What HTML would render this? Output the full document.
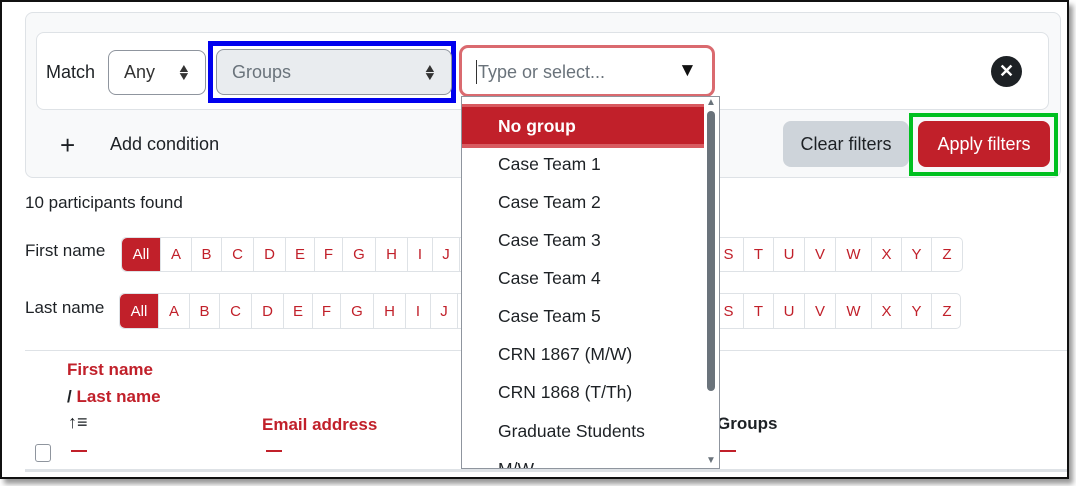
<!DOCTYPE html><html><head><style>
*{box-sizing:border-box;margin:0;padding:0}
body{width:1076px;height:486px;background:#fff;font-family:"Liberation Sans",sans-serif;position:relative;overflow:hidden}
.a{position:absolute}
.frame{left:0;top:0;width:1069px;height:479px;box-shadow:4px 5px 5px #999;background:#fff;overflow:hidden}
.bord{left:0;top:0;width:1069px;height:479px;border:2px solid #111;z-index:10}
.t{color:#1d2125;font-size:18px}
.cell{position:absolute;height:100%;border-right:1px solid #dee2e6;color:#c1202a;font-size:15px;text-align:center;display:flex;align-items:center;justify-content:center}
.item{position:absolute;left:36px;font-size:17.5px;color:#1d2125}
.ud{font-size:12px;line-height:8px;color:#333;transform:scaleX(1.2)}
</style></head><body>
<div class="a frame">
<div class="a" style="left:25px;top:12px;width:1036px;height:166px;background:#f8f9fa;border:1px solid #dee2e6;border-radius:8px"></div>
<div class="a" style="left:36px;top:32px;width:1013px;height:78px;background:#fff;border:1px solid #dee2e6;border-radius:8px"></div>
<div class="a t" style="left:46px;top:62px">Match</div>
<div class="a" style="left:108px;top:50px;width:98px;height:45px;border:1px solid #8f959e;border-radius:8px;background:#fff"></div>
<div class="a t" style="left:124px;top:62px;color:#333">Any</div>
<div class="a ud" style="left:178px;top:64px">▲<br>▼</div>
<div class="a" style="left:208px;top:41px;width:248px;height:62px;border:5px solid #0000ee"></div>
<div class="a" style="left:216px;top:49px;width:236px;height:46px;background:#e9ecef;border:1px solid #8f959e;border-radius:8px"></div>
<div class="a t" style="left:232px;top:62px;color:#6a737b">Groups</div>
<div class="a ud" style="left:424px;top:64px">▲<br>▼</div>
<div class="a" style="left:459px;top:45px;width:256px;height:52px;border:3px solid #da6a6f;border-radius:9px;background:#fff"></div>
<div class="a" style="left:476px;top:60px;width:1px;height:24px;background:#333"></div>
<div class="a t" style="left:478px;top:62px;color:#6a737b">Type or select...</div>
<div class="a" style="left:678px;top:60px;font-size:19px;color:#111">▼</div>
<div class="a" style="left:991px;top:56px;width:31px;height:31px;border-radius:50%;background:#1d2125;color:#fff;font-weight:bold;font-size:18px;text-align:center;line-height:31px">✕</div>
<div class="a" style="left:60px;top:130px;font-size:26px;color:#1d2125">+</div>
<div class="a t" style="left:110px;top:134px">Add condition</div>
<div class="a" style="left:783px;top:121px;width:126px;height:46px;background:#ced4da;border-radius:8px;color:#1d2125;font-size:18px;text-align:center;line-height:46px">Clear filters</div>
<div class="a" style="left:909px;top:113px;width:149px;height:63px;border:4px solid #00c020"></div>
<div class="a" style="left:918px;top:121px;width:132px;height:46px;background:#c1202a;border-radius:8px;color:#fff;font-size:18px;text-align:center;line-height:46px">Apply filters</div>
<div class="a" style="left:25px;top:193px;font-size:17px;color:#1d2125">10 participants found</div>
<div class="a t" style="left:25px;top:241px;font-size:17px">First name</div>
<div class="a t" style="left:25px;top:298px;font-size:17px">Last name</div>
<div class="a" style="left:121px;top:237px;width:842px;height:35px;border:1px solid #dee2e6;border-radius:5px">
<div class="cell" style="left:0;width:39px;background:#c1202a;color:#fff;border-radius:5px 0 0 5px">All</div>
<div class="cell" style="left:39px;width:31px">A</div><div class="cell" style="left:70px;width:30px">B</div><div class="cell" style="left:100px;width:32px">C</div><div class="cell" style="left:132px;width:32px">D</div><div class="cell" style="left:164px;width:29px">E</div><div class="cell" style="left:193px;width:28px">F</div><div class="cell" style="left:221px;width:33px">G</div><div class="cell" style="left:254px;width:32px">H</div><div class="cell" style="left:286px;width:25px">I</div><div class="cell" style="left:311px;width:27px">J</div>
<div class="cell" style="left:592px;width:30px">S</div><div class="cell" style="left:622px;width:30px">T</div><div class="cell" style="left:652px;width:31px">U</div><div class="cell" style="left:683px;width:31px">V</div><div class="cell" style="left:714px;width:36px">W</div><div class="cell" style="left:750px;width:30px">X</div><div class="cell" style="left:780px;width:30px">Y</div><div class="cell" style="left:810px;width:30px;border:0">Z</div>
</div>
<div class="a" style="left:119px;top:293px;width:842px;height:36px;border:1px solid #dee2e6;border-radius:5px">
<div class="cell" style="left:0;width:39px;background:#c1202a;color:#fff;border-radius:5px 0 0 5px">All</div>
<div class="cell" style="left:39px;width:31px">A</div><div class="cell" style="left:70px;width:30px">B</div><div class="cell" style="left:100px;width:32px">C</div><div class="cell" style="left:132px;width:32px">D</div><div class="cell" style="left:164px;width:29px">E</div><div class="cell" style="left:193px;width:28px">F</div><div class="cell" style="left:221px;width:33px">G</div><div class="cell" style="left:254px;width:32px">H</div><div class="cell" style="left:286px;width:25px">I</div><div class="cell" style="left:311px;width:27px">J</div>
<div class="cell" style="left:594px;width:30px">S</div><div class="cell" style="left:624px;width:30px">T</div><div class="cell" style="left:654px;width:31px">U</div><div class="cell" style="left:685px;width:31px">V</div><div class="cell" style="left:716px;width:36px">W</div><div class="cell" style="left:752px;width:30px">X</div><div class="cell" style="left:782px;width:30px">Y</div><div class="cell" style="left:812px;width:30px;border:0">Z</div>
</div>
<div class="a" style="left:25px;top:350px;width:1050px;height:1px;background:#dee2e6"></div>
<div class="a" style="left:67px;top:360px;font-weight:bold;font-size:17px;color:#c1202a">First name</div>
<div class="a" style="left:67px;top:387px;font-weight:bold;font-size:17px;color:#1d2125">/ <span style="color:#c1202a">Last name</span></div>
<div class="a" style="left:68px;top:412px;font-weight:bold;font-size:18px;color:#1d2125">↑≡</div>
<div class="a" style="left:262px;top:415px;font-weight:bold;font-size:17px;color:#c1202a">Email address</div>
<div class="a" style="left:717px;top:414px;font-weight:bold;font-size:17px;color:#1d2125">Groups</div>
<div class="a" style="left:71px;top:450px;width:16px;height:2px;background:#c1202a"></div>
<div class="a" style="left:266px;top:450px;width:16px;height:2px;background:#c1202a"></div>
<div class="a" style="left:720px;top:450px;width:16px;height:2px;background:#c1202a"></div>
<div class="a" style="left:35px;top:444px;width:16px;height:18px;border:1px solid #8f959e;border-radius:3px"></div>
<div class="a" style="left:25px;top:469px;width:1050px;height:3px;background:#dee2e6"></div>
<div class="a" style="left:461px;top:96px;width:259px;height:373px;background:#fff;border:1px solid #8f959e;overflow:hidden">
<div class="a" style="left:0;top:7px;width:242px;height:44px;background:#c1202a;border-top:3px solid #d85a60;border-bottom:4px solid #d85a60"></div>
<div class="item" style="top:19px;color:#fff;font-weight:bold">No group</div>
<div class="item" style="top:57px">Case Team 1</div>
<div class="item" style="top:95px">Case Team 2</div>
<div class="item" style="top:133px">Case Team 3</div>
<div class="item" style="top:171px">Case Team 4</div>
<div class="item" style="top:209px">Case Team 5</div>
<div class="item" style="top:247px">CRN 1867 (M/W)</div>
<div class="item" style="top:285px">CRN 1868 (T/Th)</div>
<div class="item" style="top:324px">Graduate Students</div>
<div class="item" style="top:362px">M/W</div>
<div class="a" style="left:242px;top:0;width:15px;height:371px;background:#fff"></div>
<div class="a" style="left:244px;top:0;font-size:10px;color:#6a737b">▲</div>
<div class="a" style="left:245px;top:14px;width:8px;height:280px;background:#6a737b;border-radius:4px"></div>
<div class="a" style="left:244px;top:358px;font-size:10px;color:#6a737b">▼</div>
</div>
</div>
<div class="a bord"></div>
</body></html>
